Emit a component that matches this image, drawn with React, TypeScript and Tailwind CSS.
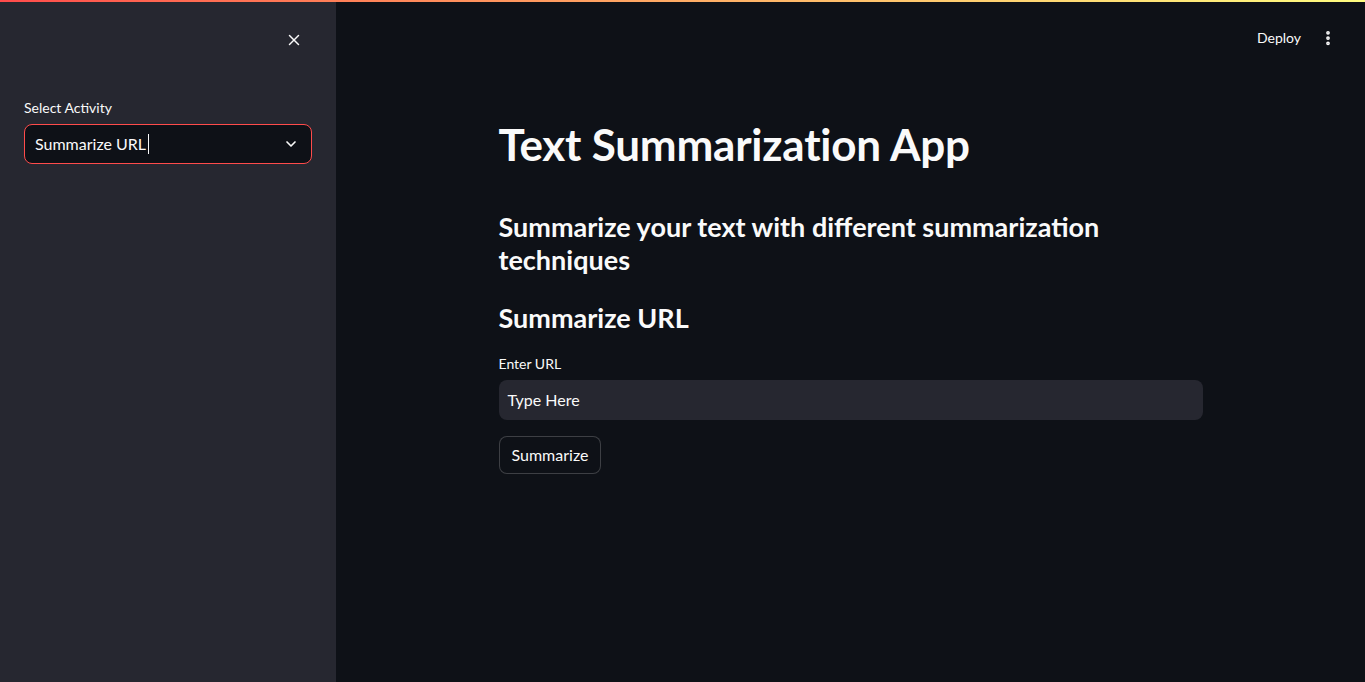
import { X, ChevronDown, EllipsisVertical } from 'lucide-react'

export default function App() {
  return (
    <div
      className="relative flex h-[682px] w-full overflow-hidden bg-[#0e1117] text-[#fafafa]"
      style={{ fontFamily: 'Lato, "Noto Sans", sans-serif' }}
    >
      {/* Top gradient line */}
      <div className="absolute left-0 right-0 top-0 z-10 h-[2px] bg-gradient-to-r from-[#ff4b4b] to-[#fffd80]" />

      {/* Sidebar */}
      <aside className="flex w-[336px] shrink-0 flex-col bg-[#262730] px-6">
        <div className="flex justify-end pt-[30px] pr-[8px]">
          <button className="flex h-5 w-5 items-center justify-center text-[#fafafa]">
            <X size={18} strokeWidth={2} />
          </button>
        </div>
        <label className="mt-[48px] text-[14px] leading-5 text-[#fafafa]">Select Activity</label>
        <div className="mt-[6px] flex h-10 items-center justify-between rounded-lg border border-[#ff4b4b] bg-[#0e1117] pl-[10px] pr-[12px]">
          <span className="flex items-center text-[16px]">
            Summarize URL
            <span className="ml-[2px] inline-block h-[20px] w-px bg-[#fafafa]" />
          </span>
          <ChevronDown size={16} strokeWidth={2.5} />
        </div>
      </aside>

      {/* Main */}
      <main className="relative flex flex-1 flex-col">
        <header className="flex h-[76px] items-start justify-end gap-[18px] pr-[28px] pt-[28px]">
          <span className="text-[14px] leading-5">Deploy</span>
          <EllipsisVertical size={18} strokeWidth={3} className="mt-[1px]" />
        </header>

        <div className="mx-auto flex w-[704px] flex-col">
          <h1 className="mt-[40px] text-[44px] font-bold leading-[56px] tracking-[-0.005em]">
            Text Summarization App
          </h1>
          <h3 className="mt-[38px] text-[27px] font-bold leading-[33px]">
            Summarize your text with different summarization techniques
          </h3>
          <h3 className="mt-[25px] text-[27px] font-bold leading-[33px]">Summarize URL</h3>
          <label className="mt-[20px] text-[14px] leading-5">Enter URL</label>
          <div className="mt-[6px] flex h-10 items-center rounded-lg bg-[#262730] px-[9px] text-[16px]">
            Type Here
          </div>
          <div className="mt-4">
            <button className="h-[38px] rounded-lg border border-[rgba(250,250,250,0.2)] bg-[#0e1117] px-3 text-[16px]">
              Summarize
            </button>
          </div>
        </div>
      </main>
    </div>
  )
}
